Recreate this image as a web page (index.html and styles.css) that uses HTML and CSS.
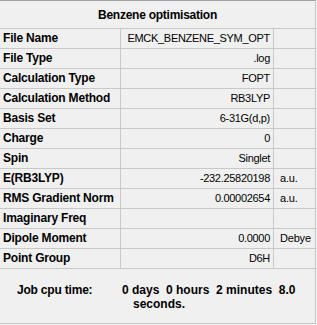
FILE: index.html
```html
<!DOCTYPE html>
<html lang="en">
<head>
<meta charset="utf-8">
<title>Benzene optimisation</title>
<link rel="stylesheet" href="styles.css">
</head>
<body>
<div class="panel">
  <div class="title">Benzene optimisation</div>
  <div class="row"><div class="k">File Name</div><div class="v">EMCK_BENZENE_SYM_OPT</div><div class="u"></div></div>
  <div class="row"><div class="k">File Type</div><div class="v">.log</div><div class="u"></div></div>
  <div class="row"><div class="k">Calculation Type</div><div class="v">FOPT</div><div class="u"></div></div>
  <div class="row"><div class="k">Calculation Method</div><div class="v">RB3LYP</div><div class="u"></div></div>
  <div class="row"><div class="k">Basis Set</div><div class="v">6-31G(d,p)</div><div class="u"></div></div>
  <div class="row"><div class="k">Charge</div><div class="v">0</div><div class="u"></div></div>
  <div class="row"><div class="k">Spin</div><div class="v">Singlet</div><div class="u"></div></div>
  <div class="row"><div class="k">E(RB3LYP)</div><div class="v">-232.25820198</div><div class="u">a.u.</div></div>
  <div class="row"><div class="k">RMS Gradient Norm</div><div class="v">0.00002654</div><div class="u">a.u.</div></div>
  <div class="row"><div class="k">Imaginary Freq</div><div class="v"></div><div class="u"></div></div>
  <div class="row"><div class="k">Dipole Moment</div><div class="v">0.0000</div><div class="u">Debye</div></div>
  <div class="row"><div class="k">Point Group</div><div class="v">D6H</div><div class="u"></div></div>
  <div class="job">
    <div class="job-label">Job cpu time:</div>
    <div class="job-value">
      <div class="job-line">0 days  0 hours  2 minutes  8.0</div>
      <div class="job-line job-cont">seconds.</div>
    </div>
  </div>
</div>
</body>
</html>
```
FILE: styles.css
```css
html, body {
  margin: 0;
  padding: 0;
  background: #f0f0f0;
}

body {
  font-family: "Liberation Sans", Arial, sans-serif;
  color: #000;
}

.panel {
  width: 315px;
  height: 322px;
  border-top: 1px solid #a0a0a0;
  border-right: 1px solid #c8c8c8;
  border-bottom: 1px solid #c8c8c8;
  display: flex;
  flex-direction: column;
}

.title {
  height: 27px;
  line-height: 29px;
  text-align: center;
  font-weight: bold;
  font-size: 12px;
  letter-spacing: -0.25px;
  border-bottom: 1px solid #c8c8c8;
}

.row {
  display: flex;
  height: 19px;
  border-bottom: 1px solid #c8c8c8;
  line-height: 19px;
}

.k {
  width: 117px;
  padding-left: 3px;
  border-right: 1px solid #c8c8c8;
  font-weight: bold;
  font-size: 12px;
  letter-spacing: -0.2px;
  white-space: nowrap;
}

.v {
  width: 149px;
  padding-right: 3px;
  border-right: 1px solid #c8c8c8;
  text-align: right;
  font-size: 11px;
  letter-spacing: -0.3px;
  white-space: nowrap;
}

.u {
  width: 35px;
  padding-left: 6px;
  font-size: 11px;
  letter-spacing: -0.2px;
  white-space: nowrap;
}

.job {
  flex: 1;
  display: flex;
  padding-top: 14px;
  font-weight: bold;
  font-size: 12px;
  line-height: 14px;
}

.job-label {
  width: 105px;
  padding-left: 17px;
  letter-spacing: -0.2px;
}

.job-line {
  white-space: pre;
}

.job-cont {
  padding-left: 11px;
}
```
